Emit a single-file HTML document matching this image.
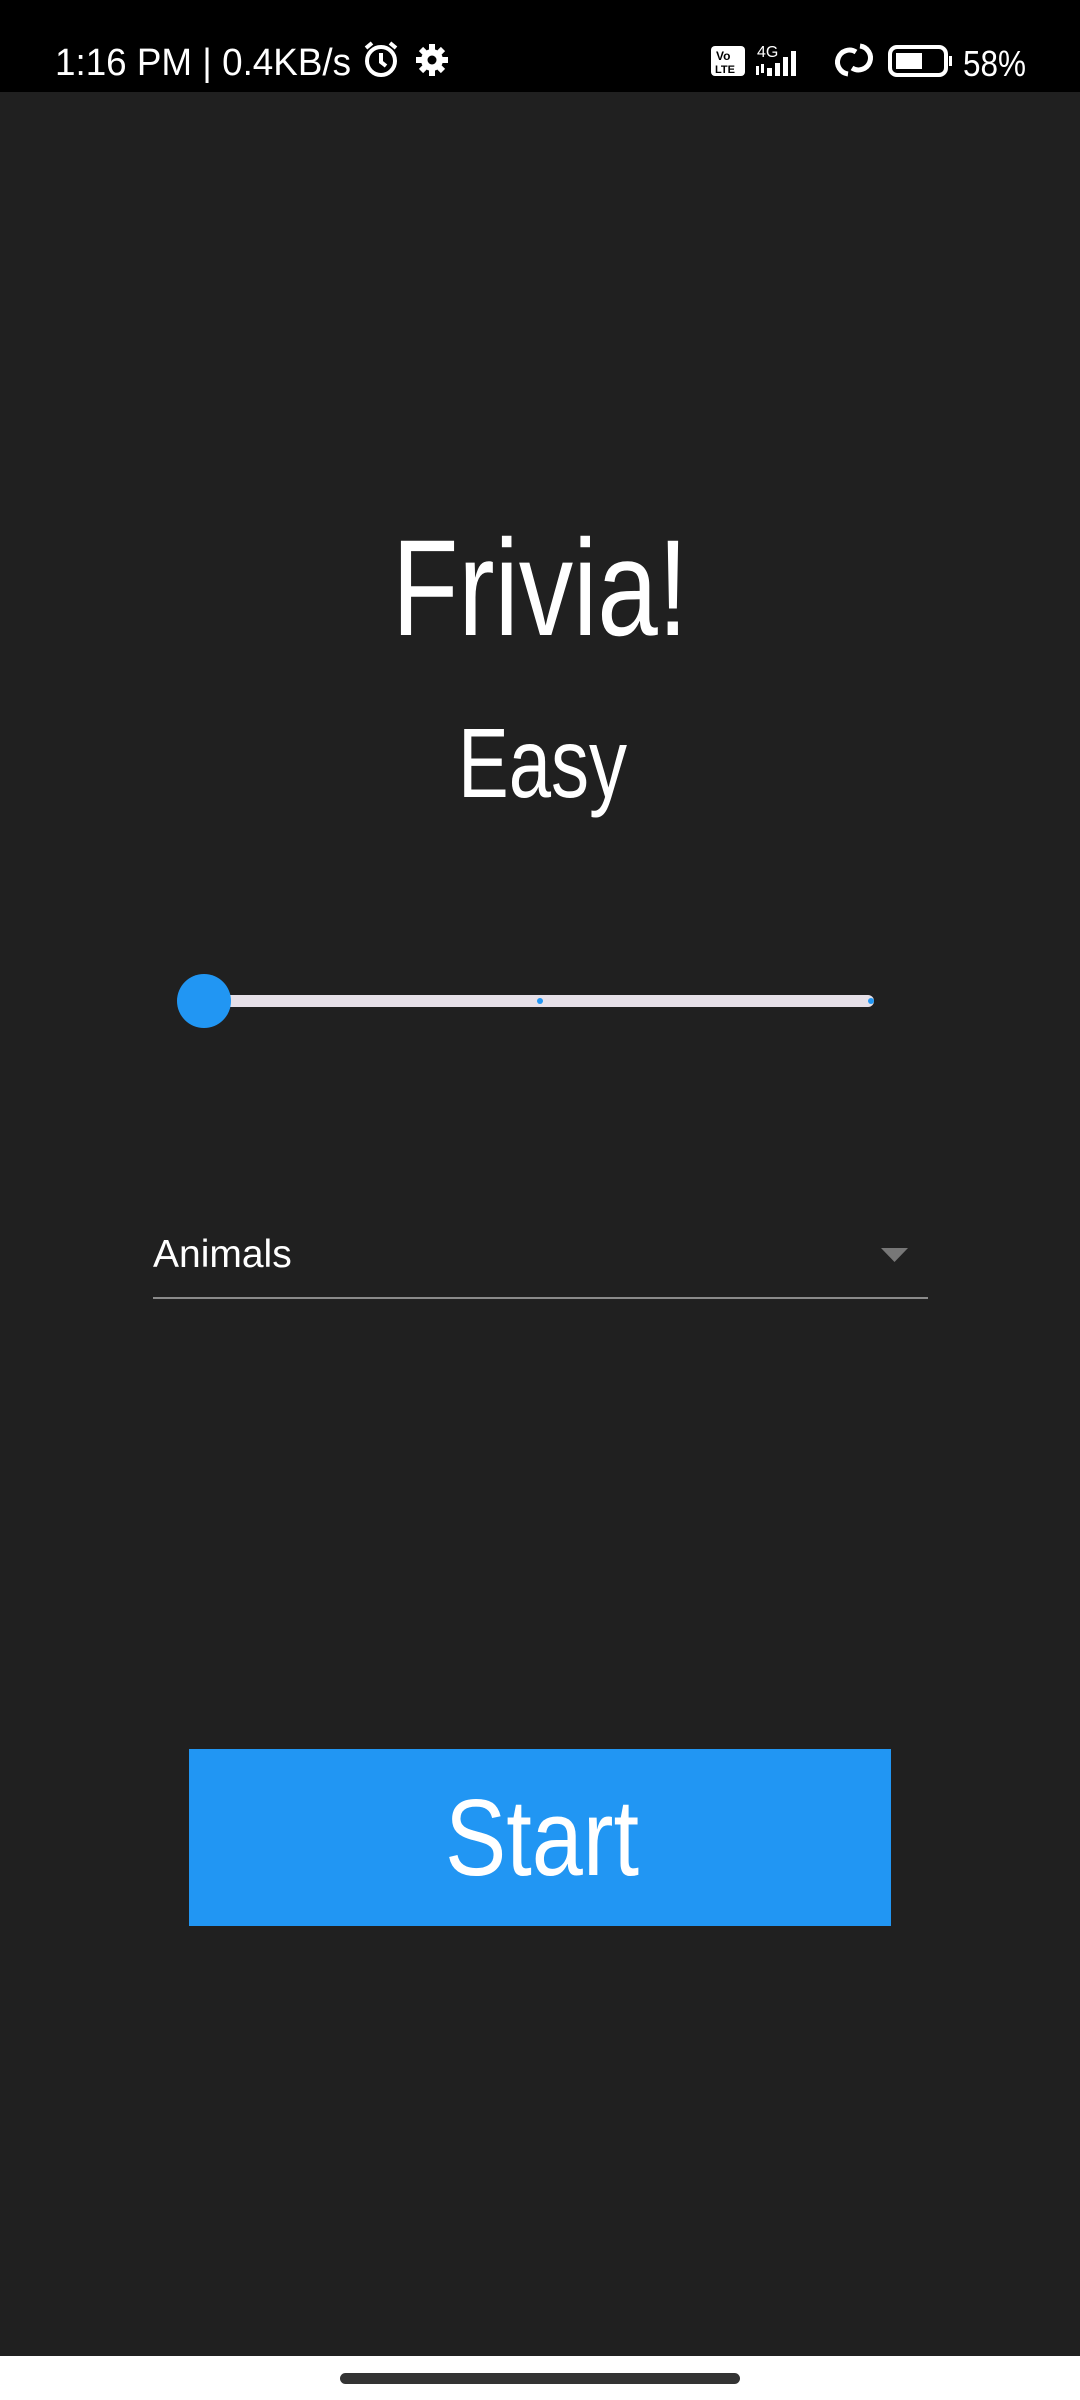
<!DOCTYPE html>
<html><head><meta charset="utf-8">
<style>
html,body{margin:0;padding:0;background:#202020;}
svg{display:block}
text{font-family:"Liberation Sans",sans-serif;}
</style></head>
<body>
<svg width="1080" height="2400" viewBox="0 0 1080 2400" xmlns="http://www.w3.org/2000/svg">
<rect width="1080" height="2400" fill="#202020"/>
<!-- status bar -->
<rect width="1080" height="92" fill="#000"/>
<text x="55" y="75" font-size="38" fill="#fff" textLength="296" lengthAdjust="spacingAndGlyphs">1:16 PM | 0.4KB/s</text>
<!-- alarm -->
<g fill="none" stroke="#fff" stroke-width="4">
<circle cx="381" cy="61" r="14"/>
<path d="M381 53v9l5 4"/>
<path d="M366 48l6-5M396 48l-6-5"/>
</g>
<!-- gear -->
<g fill="#fff">
<circle cx="432" cy="60" r="11"/>
<g stroke="#fff" stroke-width="6">
<path d="M432 44v32M416 60h32M421 49l22 22M443 49l-22 22"/>
</g>
<circle cx="432" cy="60" r="4.5" fill="#000"/>
</g>
<!-- volte -->
<rect x="711" y="46" width="34" height="30" rx="4" fill="#fff"/>
<text x="716" y="60" font-size="12" font-weight="bold" fill="#000">Vo</text>
<text x="715" y="73" font-size="11" font-weight="bold" fill="#000">LTE</text>
<!-- 4G signal -->
<text x="757" y="57" font-size="16" fill="#fff">4G</text>
<g fill="#fff">
<rect x="756" y="66" width="3" height="9"/><rect x="761" y="64" width="3" height="9"/>
<rect x="767" y="68" width="5" height="8"/><rect x="775" y="63" width="5" height="13"/>
<rect x="783" y="57" width="5" height="19"/><rect x="791" y="51" width="5" height="25"/>
</g>
<!-- loop icon -->
<g fill="none" stroke="#fff" stroke-width="5">
<path d="M848 74a12 12 0 1 1 8-22"/>
<path d="M860 46a12 12 0 1 1 -8 22"/>
</g>
<!-- battery -->
<rect x="890" y="47" width="56" height="28" rx="7" fill="none" stroke="#fff" stroke-width="4"/>
<rect x="896" y="53" width="26" height="16" fill="#fff"/>
<rect x="949" y="56" width="3" height="10" fill="#fff"/>
<text x="963" y="76" font-size="36" fill="#fff" textLength="63" lengthAdjust="spacingAndGlyphs">58%</text>

<!-- title -->
<text x="392" y="635" font-size="137" fill="#fff" textLength="296" lengthAdjust="spacingAndGlyphs">Frivia!</text>
<text x="458" y="797" font-size="98" fill="#fff" textLength="169" lengthAdjust="spacingAndGlyphs">Easy</text>

<!-- slider -->
<rect x="204" y="995" width="670" height="12" rx="6" fill="#e6e0e8"/>
<circle cx="540" cy="1001" r="3" fill="#2196f3"/>
<circle cx="871" cy="1001" r="3" fill="#2196f3"/>
<circle cx="204" cy="1001" r="27" fill="#2196f3"/>

<!-- dropdown -->
<text x="153" y="1267" font-size="39" fill="#fff">Animals</text>
<path d="M881 1248h27l-13.5 14z" fill="#777"/>
<rect x="153" y="1297" width="775" height="2" fill="#8a8a8a"/>

<!-- button -->
<rect x="189" y="1749" width="702" height="177" fill="#2196f3"/>
<text x="445" y="1875" font-size="109" fill="#fff" textLength="194" lengthAdjust="spacingAndGlyphs">Start</text>

<!-- nav bar -->
<rect x="0" y="2356" width="1080" height="44" fill="#fff"/>
<rect x="340" y="2373" width="400" height="11" rx="5.5" fill="#333"/>
</svg>
</body></html>
